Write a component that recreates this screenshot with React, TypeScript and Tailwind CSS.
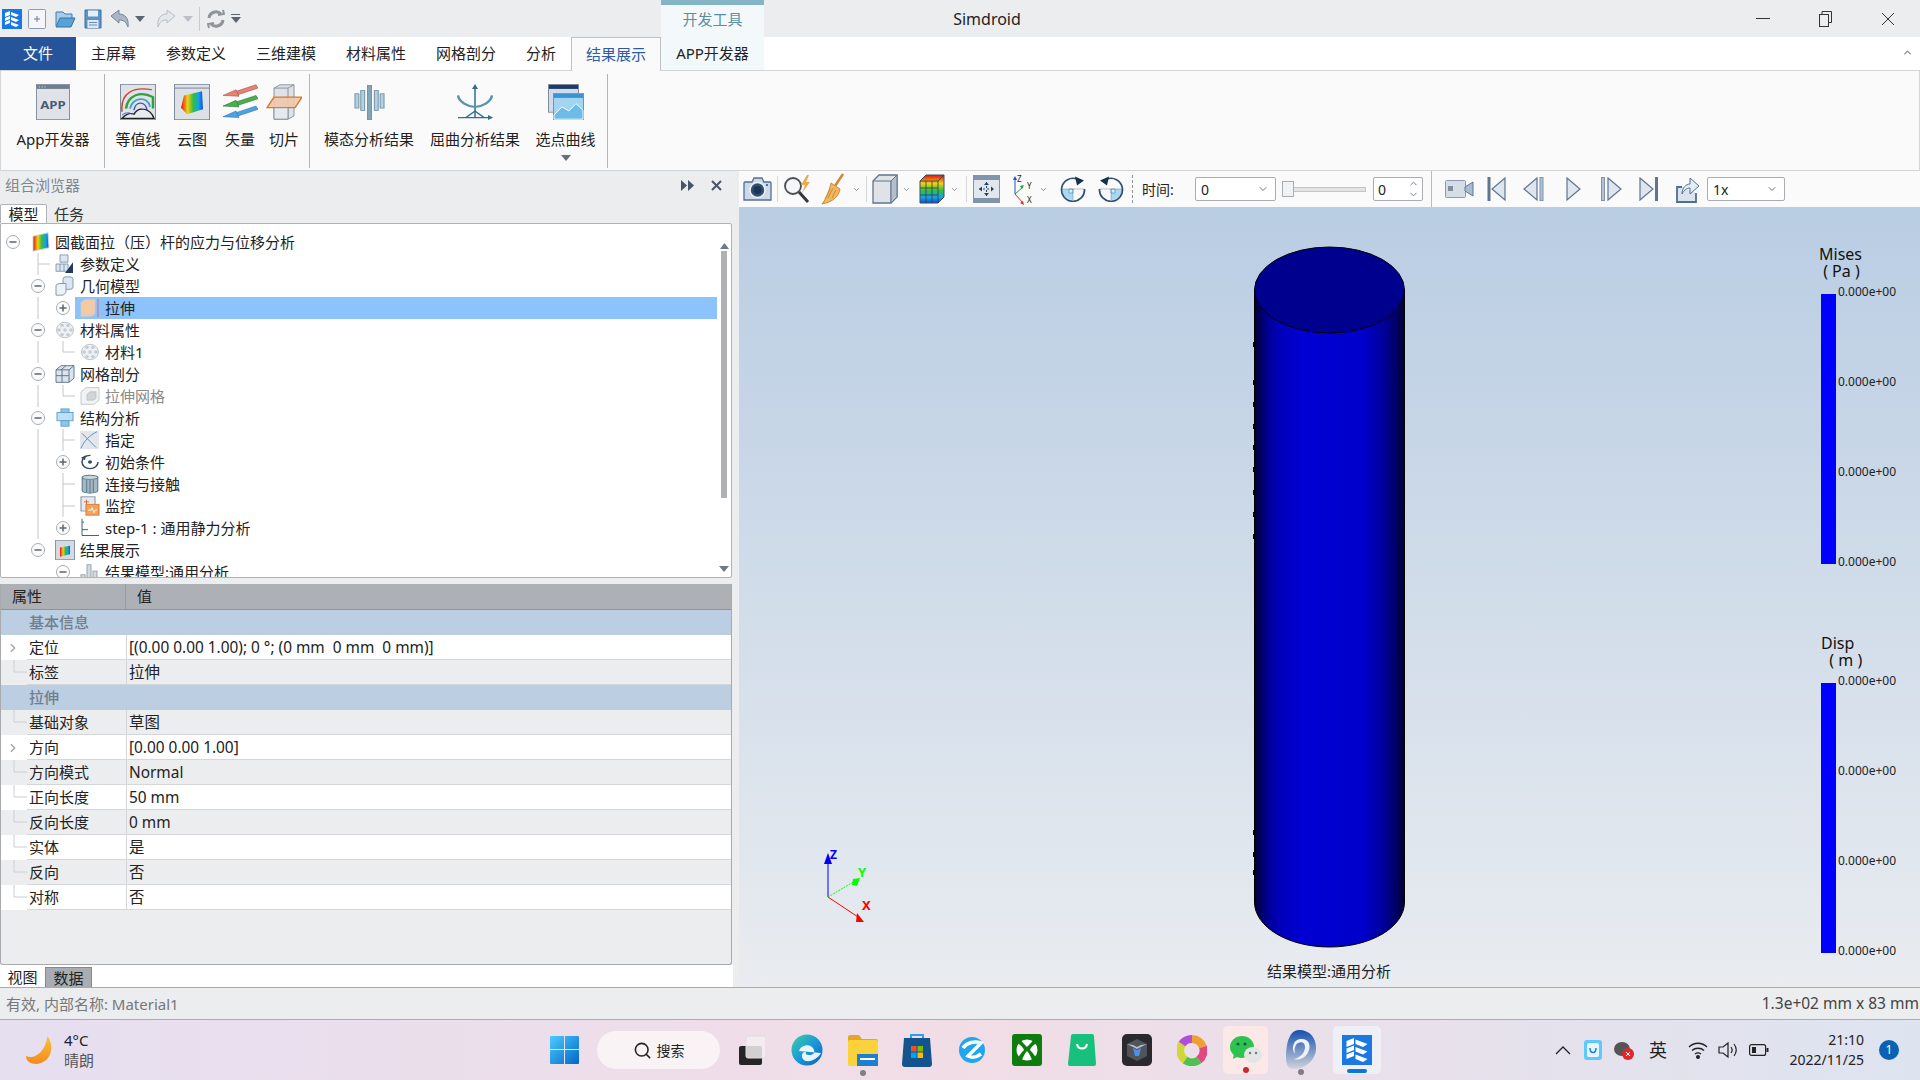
import React from "react";
import { Search, ChevronDown, ChevronUp, ChevronRight } from "lucide-react";

const FONT = "[font-family:'Noto_Sans','Noto_Sans_CJK_SC',sans-serif]";

const Ramp = ({ id, dir = "h" }: { id: string; dir?: string }) => (
  <linearGradient id={id} x1="0" y1="0" x2={dir === "h" ? "1" : "0"} y2={dir === "h" ? "0" : "1"}>
    <stop offset="0" stopColor="#e01010" />
    <stop offset="0.3" stopColor="#f4d010" />
    <stop offset="0.55" stopColor="#30c040" />
    <stop offset="0.8" stopColor="#18a0e8" />
    <stop offset="1" stopColor="#1050d0" />
  </linearGradient>
);

/* ---------- quick access ---------- */
const SimLogo = ({ s = 20 }: { s?: number }) => (
  <svg width={s} height={s} viewBox="0 0 20 20">
    <rect width="20" height="20" fill="#1b78e2" />
    <path d="M3 4l5-2v4l-5 2zM3 9l5-2v3l-5 2zM3 13l5-2v3l-5 2z" fill="#fff" />
    <path d="M9 3l8 3-3 2-5-2zM9 8l8 3-3 2-5-2zM9 13l8 3-3 2-5-2z" fill="#fff" />
  </svg>
);
const QatNew = () => (
  <svg width="18" height="20" viewBox="0 0 18 20"><rect x=".5" y=".5" width="17" height="19" rx="1" fill="#f4f6f9" stroke="#8b9cb3" /><path d="M9 7v6M6 10h6" stroke="#6a7a90" /></svg>
);
const QatOpen = () => (
  <svg width="21" height="18" viewBox="0 0 21 18"><path d="M1 16V2h7l2 2h7v4" fill="#a7cbe8" stroke="#3b7fb5" /><path d="M1 17l4-9h15l-4 9z" fill="#5aa1d8" stroke="#2d76ad" /></svg>
);
const QatSave = () => (
  <svg width="18" height="20" viewBox="0 0 18 20"><path d="M1 1h16v18H1z" fill="#5e93c7" stroke="#3d6f9f" /><rect x="4" y="1.5" width="10" height="6" fill="#e6eef6" /><rect x="3.500" y="11" width="11" height="8" fill="#dfe8f2" /><path d="M5 13.500h8M5 16h8" stroke="#6b8db0" /></svg>
);
const Undo = ({ c = "#74879c", flip = false }: { c?: string; flip?: boolean }) => (
  <svg width="20" height="20" viewBox="0 0 20 20" style={flip ? { transform: "scaleX(-1)" } : undefined}><path d="M1 7l8-6v4c6 0 10 4 9 13-2-5-4-7-9-7v3z" fill={c === "#74879c" ? "#aab6c4" : "#e3e6ea"} stroke={c} /></svg>
);
const TinyDown = ({ c = "#5d6670" }: { c?: string }) => (
  <svg width="10" height="6" viewBox="0 0 10 6"><path d="M0 0h10L5 6z" fill={c} /></svg>
);
const Refresh = () => (
  <svg width="18" height="20" viewBox="0 0 18 20" fill="none" stroke="#8e9499" strokeWidth="3"><path d="M2 9a7 7 0 0 1 12-4" /><path d="M16 11a7 7 0 0 1-12 4" /><path d="M11 6l6-1-1-4M7 14l-6 1 1 4" strokeWidth="2" /></svg>
);

const TitleBar = () => (
  <div className="h-[37px] shrink-0 flex bg-[#ecedef]">
    <div className="w-[661px] flex items-center">
      <div className="ml-[2px]"><SimLogo /></div>
      <div className="ml-[6px]"><QatNew /></div>
      <div className="ml-[9px]"><QatOpen /></div>
      <div className="ml-[8px]"><QatSave /></div>
      <div className="ml-[8px]"><Undo /></div>
      <div className="ml-[5px]"><TinyDown /></div>
      <div className="ml-[11px]"><Undo c="#b8bec5" flip /></div>
      <div className="ml-[7px]"><TinyDown c="#bcc1c7" /></div>
      <div className="ml-[6px] w-px h-[24px] bg-[#c8cbcf]" />
      <div className="ml-[7px]"><Refresh /></div>
      <div className="ml-[6px] flex flex-col gap-[2px]"><div className="w-[9px] h-px bg-[#5d6670]" /><TinyDown /></div>
    </div>
    <div className="w-[103px] bg-[#f3f8fb] border-t-[5px] border-[#85b5c5] flex items-center justify-center pb-[4px] text-[15px] text-[#5c8fa0]">开发工具</div>
    <div className="w-[446px] flex items-center justify-center text-[16px] text-[#222]">Simdroid</div>
    <div className="flex-1 relative flex items-center">
      <div className="ml-[546px] w-[14px] h-px bg-[#333]" />
      <svg className="ml-[49px]" width="13" height="16" viewBox="0 0 13 16" fill="none" stroke="#333"><rect x=".5" y="3.500" width="9" height="12" fill="#ecedef" /><path d="M3 3V.5h9.500v11H10" /></svg>
      <svg className="ml-[49px]" width="14" height="14" viewBox="0 0 14 14" stroke="#333"><path d="M1 1l12 12M13 1L1 13" /></svg>
    </div>
  </div>
);

const TABS: [string, string][] = [
  ["主屏幕", "w-[75px]"], ["参数定义", "w-[90px]"], ["三维建模", "w-[90px]"], ["材料属性", "w-[90px]"], ["网格剖分", "w-[90px]"], ["分析", "w-[60px]"],
];
const TabRow = () => (
  <div className="h-[33px] shrink-0 flex items-stretch bg-white text-[15px] text-[#222]">
    <div className="w-[76px] bg-[#26549b] text-white flex items-center justify-center">文件</div>
    {TABS.map(([t, w]) => <div key={t} className={`${w} flex items-center justify-center`}>{t}</div>)}
    <div className="w-[90px] flex items-center justify-center text-[#2a5ca8] bg-[#fafafa] border-x border-t border-[#bfc1c4] h-[34px] z-10">结果展示</div>
    <div className="w-[103px] flex items-center justify-center bg-[#f3f8fb]">APP开发器</div>
    <div className="flex-1 flex justify-end items-center pr-[7px] pb-[2px]"><ChevronUp size={11} strokeWidth={3} className="text-[#8a8f95]" /></div>
  </div>
);

/* ---------- ribbon icons ---------- */
const AppIcon = () => (
  <svg width="34" height="36" viewBox="0 0 36 44" preserveAspectRatio="none"><rect x=".5" y=".5" width="35" height="43" fill="#dfe3e8" stroke="#7f8c9c" /><rect x="1" y="1" width="34" height="5" fill="#6e7d90" /><path d="M3 3.500h1M6 3.500h1M9 3.500h1" stroke="#fff" /><text x="18" y="31" textAnchor="middle" fontSize="14" fontWeight="700" fill="#4a5a70" fontFamily="Noto Sans">APP</text></svg>
);
const ContourIcon = () => (
  <svg width="36" height="36" viewBox="0 0 36 44" preserveAspectRatio="none" fill="none">
    <rect x=".5" y=".5" width="35" height="43" fill="#dfe3e8" stroke="#7f8c9c" />
    <path d="M2 34C0 10 14 3 32 7" stroke="#d04030" strokeWidth="1.500" />
    <path d="M6 30C8 14 20 8 33 16v14" stroke="#30a040" strokeWidth="2.500" />
    <path d="M10 30c2-14 18-16 20-2" stroke="#38a8c0" strokeWidth="2" />
    <path d="M14 32c1-12 12-11 13 0" stroke="#5050c8" strokeWidth="1.500" />
    <path d="M2 42c6-8 10-6 12-5 4-10 16-8 20 5z" stroke="#222" strokeWidth="1.500" fill="#e8ecf0" />
    <path d="M2 38c4-4 8-3 10-1" stroke="#5050c8" />
  </svg>
);
const CloudIcon = () => (
  <svg width="36" height="36" viewBox="0 0 36 44" preserveAspectRatio="none">
    <defs><Ramp id="rc" /></defs>
    <rect x=".5" y=".5" width="35" height="43" fill="#dde1e6" stroke="#7f8c9c" />
    <path d="M1 5h34" stroke="#6e7d90" />
    <path d="M10 14l18-5 1 22-16 6-6-8z" fill="url(#rc)" />
  </svg>
);
const Arrow3 = ({ y, c, d }: { y: number; c: string; d: string }) => (
  <g transform={`translate(0 ${y})`}><path d="M14 8L34 0l2 4-20 8z" fill={c} stroke={d} strokeWidth=".6" /><path d="M1 13l13-7 3 8z" fill={c} stroke={d} strokeWidth=".6" /></g>
);
const VectorIcon = () => (
  <svg width="36" height="36" viewBox="0 0 36 44" preserveAspectRatio="none"><Arrow3 y={1} c="#e98070" d="#a04c40" /><Arrow3 y={14} c="#48b050" d="#287030" /><Arrow3 y={27} c="#4da3e0" d="#2a6aa0" /></svg>
);
const SliceIcon = () => (
  <svg width="36" height="36" viewBox="0 0 36 44" preserveAspectRatio="none">
    <path d="M8 5l6-4h14v38l-6 4H8z" fill="#dfe3e8" stroke="#7f8c9c" /><path d="M8 5h14v38M22 5l6-4" fill="none" stroke="#7f8c9c" />
    <path d="M1 29l7-13h28l-7 13z" fill="#f0c8a8" fillOpacity=".9" stroke="#d8772e" strokeWidth="1.500" />
    <path d="M8 29h14v14H8z" fill="#e6e9ed" stroke="#7f8c9c" />
  </svg>
);
const ModalIcon = () => (
  <svg width="31" height="35" viewBox="0 0 32 44" preserveAspectRatio="none"><g stroke="#6b90a6" fill="#b8d0de"><rect x="14" y=".5" width="4" height="43" fill="#84a5b7" /><rect x="1" y="11" width="4" height="18" /><rect x="7" y="7" width="4" height="25" /><rect x="21" y="7" width="4" height="25" /><rect x="27" y="11" width="4" height="18" /></g></svg>
);
const BuckleIcon = () => (
  <svg width="36" height="36" viewBox="0 0 36 44" preserveAspectRatio="none" fill="none" stroke="#2f6f8f" strokeWidth="1.500">
    <path d="M18 4v38M1 41h34" /><path d="M18 0l-3 6h6zM36 41l-5-3v6z" fill="#2f6f8f" stroke="none" />
    <path d="M1 14c1 8 10 14 17 14s16-6 17-14" stroke="#5b93ad" strokeWidth="2.500" />
    <path d="M9 41l9-8 9 8" />
  </svg>
);
const CurveIcon = () => (
  <svg width="36" height="36" viewBox="0 0 36 44" preserveAspectRatio="none">
    <rect x=".5" y=".5" width="30" height="34" fill="#cfdcea" stroke="#7f8c9c" /><rect x="1" y="1" width="29" height="5" fill="#1f3a63" />
    <rect x="5.500" y="11.500" width="30" height="32" fill="#a3d4f2" stroke="#4ba0d8" /><rect x="6" y="12" width="29" height="5" fill="#3b93d0" />
    <path d="M6 38l8-10 7 5 7-9 7 8v11H6z" fill="#6cbbe8" stroke="#fff" />
  </svg>
);

const RibBtn = ({ w, label, icon }: { w: string; label: string; icon: React.ReactNode }) => (
  <div className={`${w} flex flex-col items-center shrink-0`}>
    <div className="h-[36px] mt-[13px] flex items-center justify-center">{icon}</div>
    <div className="mt-[8px] text-[15px] leading-[22px] text-[#222] whitespace-nowrap">{label}</div>
  </div>
);
const RibSep = () => <div className="w-px h-[94px] mt-[3px] bg-[#b4b6b9] shrink-0" />;
const Ribbon = () => (
  <div className="h-[101px] shrink-0 flex bg-[#fafafa] border border-[#d3d4d6] pl-[1px] items-start">
    <RibBtn w="w-[102px]" label="App开发器" icon={<AppIcon />} />
    <RibSep />
    <div className="w-[6px]" />
    <RibBtn w="w-[54px]" label="等值线" icon={<ContourIcon />} />
    <RibBtn w="w-[54px]" label="云图" icon={<CloudIcon />} />
    <RibBtn w="w-[42px]" label="矢量" icon={<VectorIcon />} />
    <RibBtn w="w-[46px]" label="切片" icon={<SliceIcon />} />
    <div className="w-[2px]" />
    <RibSep />
    <RibBtn w="w-[118px]" label="模态分析结果" icon={<ModalIcon />} />
    <RibBtn w="w-[94px]" label="屈曲分析结果" icon={<BuckleIcon />} />
    <div className="w-[85px] pl-[2px] flex flex-col items-center shrink-0">
      <RibBtn w="w-[84px]" label="选点曲线" icon={<CurveIcon />} />
      <div className="mt-[5px]"><TinyDown c="#6a6f75" /></div>
    </div>
    <RibSep />
  </div>
);

/* ---------- tree ---------- */
const Cell = ({ t }: { t: string }) => {
  const g = "#c4c6c9";
  return (
    <svg width="25" height="22" viewBox="0 0 25 22" className="shrink-0" fill="none">
      {t === "v" && <path d="M13 0v22" stroke={g} />}
      {t === "T" && <path d="M13 0v22M13 11h12" stroke={g} />}
      {t === "L" && <path d="M13 0v11h12" stroke={g} />}
      {(t === "+" || t === "-") && (
        <>
          <circle cx="13" cy="11" r="6.500" fill="#fbfbfb" stroke="#a9adb2" />
          <path d="M9.500 11h7" stroke="#5e666f" strokeWidth="1.500" />
          {t === "+" && <path d="M13 7.500v7" stroke="#5e666f" strokeWidth="1.500" />}
        </>
      )}
    </svg>
  );
};
const TI = { width: 20, height: 20, preserveAspectRatio: "none" as const };
const TCloud = () => (
  <svg {...TI} viewBox="0 0 20 24"><defs><Ramp id="t1" /></defs><path d="M3 5l15-4 1 18-16 4z" fill="url(#t1)" stroke="#cfd6de" /></svg>
);
const TParam = () => (
  <svg {...TI} viewBox="0 0 20 22" fill="#dde6f0" stroke="#6f86a3" strokeWidth=".8"><path d="M5 1h8v8H5zM1 11h12v8H1z" /><path d="M5 11v8M9 11v8" /><path d="M18 9v12h-8z" fill="#1f3a63" stroke="none" /></svg>
);
const TGeo = () => (
  <svg {...TI} viewBox="0 0 20 24" fill="#dbe6f2" stroke="#7d93ad"><rect x="8" y="1" width="10" height="15" rx="3" /><path d="M1 11l3-2h7v11l-3 3H1z" fill="#eaf1f8" /></svg>
);
const TExtrude = () => (
  <svg {...TI} viewBox="0 0 20 24"><path d="M1 5l4-3h10v17l-4 3H1z" fill="#f4c9a4" stroke="#c8ccd2" /><path d="M1 19h10l4-3" fill="none" stroke="#ccd0d5" /><path d="M18 1v22" stroke="#d26a6a" /></svg>
);
const TMat = () => (
  <svg {...TI} viewBox="0 0 20 22" stroke="#b9c2cc"><circle cx="10" cy="11" r="8.500" fill="#eef1f4" /><g fill="#c3cbd4" stroke="none">{[[7,6],[13,6],[4,11],[10,11],[16,11],[7,16],[13,16]].map(([x,y],i)=><circle key={i} cx={x} cy={y} r="1.800" />)}</g></svg>
);
const TMesh = () => (
  <svg {...TI} viewBox="0 0 20 24" fill="#dbe3ec" stroke="#58708d"><path d="M1 7l5-5h13v15l-5 5H1z" /><path d="M1 7h13v15M14 7l5-5M7 7v15M1 14h13M11 2l-5 5" fill="none" /></svg>
);
const TMeshG = () => (
  <svg {...TI} viewBox="0 0 20 24" fill="#f1f2f3" stroke="#c2c5c8"><path d="M1 7l5-5h13v15l-5 5H1z" /><path d="M7 10l3-3h6v8l-3 2H7z" fill="#d2d4d7" /></svg>
);
const TStruct = () => (
  <svg {...TI} viewBox="0 0 20 22" fill="#8ec7ea" stroke="#5fa0cb"><rect x="6" y="1" width="8" height="4" /><rect x="2" y="5" width="16" height="9" fill="#bfe0f4" /><rect x="6" y="14" width="8" height="6" /></svg>
);
const TAssign = () => (
  <svg {...TI} viewBox="0 0 20 24" fill="none"><rect x="0" y="1" width="19" height="22" fill="#e3e6ea" /><path d="M2 4l14 17M1 22c3-9 9-16 16-20" stroke="#4f8cc0" /></svg>
);
const TInit = () => (
  <svg {...TI} viewBox="0 0 20 24" fill="none"><circle cx="10" cy="12" r="8" stroke="#2f4a6b" strokeWidth="1.500" strokeDasharray="38 12" /><circle cx="10" cy="12" r="2" fill="#2f4a6b" /><path d="M1 7l5-3-1 6z" fill="#2f4a6b" /></svg>
);
const TContact = () => (
  <svg {...TI} viewBox="0 0 18 24" stroke="#5c7f8f" fill="#a8b8c0"><path d="M2 4h14v16a7 3 0 0 1-14 0z" /><ellipse cx="9" cy="4" rx="7" ry="2.500" fill="#cbd6db" /><path d="M6 7v15M9 7v16M12 7v15" /></svg>
);
const TMonitor = () => (
  <svg {...TI} viewBox="0 0 20 24"><rect x="1" y="1" width="14" height="17" fill="#e6eaef" stroke="#7d8c9d" /><rect x="6" y="10" width="13" height="13" fill="#f2a25a" stroke="#d87a2a" /><path d="M8 17h3l1-3 2 6 1-3h2" fill="none" stroke="#fff" /><path d="M4 7h5M6.500 4.500v5" stroke="#d8602a" /></svg>
);
const TStep = () => (
  <svg {...TI} viewBox="0 0 20 24" fill="none" stroke="#38536f"><path d="M2 1v20h17" /><path d="M2 5h2M2 14h6" /></svg>
);
const TResult = () => (
  <svg {...TI} viewBox="0 0 20 24"><defs><Ramp id="t2" /></defs><rect x=".5" y=".5" width="19" height="23" fill="#d6dae0" stroke="#8b96a3" /><path d="M5 9l10-2v10l-10 3z" fill="url(#t2)" /></svg>
);
const TBars = () => (
  <svg {...TI} viewBox="0 0 20 22" fill="#d5dae0" stroke="#9aa3ad"><rect x="1" y="14" width="4" height="8" /><rect x="7" y="3" width="4" height="19" /><rect x="13" y="10" width="4" height="12" /></svg>
);

type Row = { c: string[]; i: React.ReactNode; t: string; sel?: boolean; gray?: boolean };
const ROWS: Row[] = [
  { c: ["-"], i: <TCloud />, t: "圆截面拉（压）杆的应力与位移分析" },
  { c: ["", "T"], i: <TParam />, t: "参数定义" },
  { c: ["", "-"], i: <TGeo />, t: "几何模型" },
  { c: ["", "v", "+"], i: <TExtrude />, t: "拉伸", sel: true },
  { c: ["", "-"], i: <TMat />, t: "材料属性" },
  { c: ["", "v", "L"], i: <TMat />, t: "材料1" },
  { c: ["", "-"], i: <TMesh />, t: "网格剖分" },
  { c: ["", "v", "L"], i: <TMeshG />, t: "拉伸网格", gray: true },
  { c: ["", "-"], i: <TStruct />, t: "结构分析" },
  { c: ["", "v", "T"], i: <TAssign />, t: "指定" },
  { c: ["", "v", "+"], i: <TInit />, t: "初始条件" },
  { c: ["", "v", "T"], i: <TContact />, t: "连接与接触" },
  { c: ["", "v", "T"], i: <TMonitor />, t: "监控" },
  { c: ["", "v", "+"], i: <TStep />, t: "step-1 : 通用静力分析" },
  { c: ["", "-"], i: <TResult />, t: "结果展示" },
  { c: ["", "", "-"], i: <TBars />, t: "结果模型:通用分析" },
];

const Tree = () => (
  <div className="h-[355px] w-[732px] shrink-0 flex bg-white border border-[#b0b2b5] rounded-[2px] overflow-hidden">
    <div className="w-[717px] -ml-[1px] pt-[7px] shrink-0">
      {ROWS.map((r, idx) => (
        <div key={idx} className="h-[22px] flex items-stretch">
          {r.c.map((t, i) => <Cell key={i} t={t} />)}
          <div className={`flex-1 flex items-center pl-[5px] ${r.sel ? "bg-[#8cc3fc]" : ""}`}>
            <div className="w-[25px] flex items-center">{r.i}</div>
            <span className={`text-[15px] leading-[22px] whitespace-nowrap ${r.gray ? "text-[#8a8a8a]" : "text-[#222]"}`}>{r.t}</span>
          </div>
        </div>
      ))}
    </div>
    <div className="w-[14px] flex flex-col items-center pt-[19px] pb-[5px]">
      <svg width="9" height="6" viewBox="0 0 9 6"><path d="M0 6h9L4.500 0z" fill="#6f7a85" /></svg>
      <div className="w-[6px] h-[247px] mt-[2px] bg-[#aeb1b5]" />
      <div className="flex-1" />
      <TinyDown c="#6f7a85" />
    </div>
  </div>
);

/* ---------- properties ---------- */
type P = { k: string; v?: string; head?: boolean; exp?: boolean; white?: boolean };
const PROPS: P[] = [
  { k: "基本信息", head: true },
  { k: "定位", v: "[(0.00 0.00 1.00); 0 °; (0 mm  0 mm  0 mm)]", exp: true, white: true },
  { k: "标签", v: "拉伸" },
  { k: "拉伸", head: true },
  { k: "基础对象", v: "草图" },
  { k: "方向", v: "[0.00 0.00 1.00]", exp: true, white: true },
  { k: "方向模式", v: "Normal" },
  { k: "正向长度", v: "50 mm", white: true },
  { k: "反向长度", v: "0 mm" },
  { k: "实体", v: "是", white: true },
  { k: "反向", v: "否" },
  { k: "对称", v: "否", white: true },
];
const PropRow = ({ p }: { p: P }) => {
  if (p.head)
    return <div className="h-[25px] bg-[#bbcee2] pl-[28px] flex items-center text-[15px] font-medium text-[#6f7f8f]">{p.k}</div>;
  const bg = p.white ? "bg-white" : "bg-[#ecedef]";
  return (
    <div className={`h-[25px] flex ${bg}`}>
      <div className="w-[26px] flex items-center bg-white shrink-0 relative">
        {p.exp ? (
          <ChevronRight size={14} strokeWidth={2} className="ml-[5px] text-[#9aa0a6]" />
        ) : (
          <svg width="26" height="25" viewBox="0 0 26 25" fill="none" className={p.white ? "bg-white" : "bg-[#ecedef]"}><path d="M13 0v12h13" stroke="#ccced1" /></svg>
        )}
      </div>
      <div className="w-[99px] pl-[2px] flex items-center text-[15px] text-[#222] border-b border-[#d4d6d9] shrink-0">{p.k}</div>
      <div className="flex-1 pl-[2px] pt-[1px] flex items-center text-[15.4px] text-[#222] border-b border-l border-[#d4d6d9] whitespace-pre">{p.v}</div>
    </div>
  );
};
const Props = () => (
  <div className="h-[381px] w-[732px] shrink-0 mt-[6px] flex flex-col bg-[#ecedef] border-x border-b border-[#a8aaad] rounded-b-[3px] overflow-hidden">
    <div className="h-[26px] flex bg-[#adb1b5] border-b border-[#8f9397] text-[15px] text-[#222] shrink-0">
      <div className="w-[125px] pl-[11px] flex items-center border-r border-[#979b9f]">属性</div>
      <div className="pl-[11px] flex items-center">值</div>
    </div>
    {PROPS.map((p, i) => <PropRow key={i} p={p} />)}
  </div>
);

const LeftPanel = () => (
  <div className="w-[739px] shrink-0 flex flex-col bg-[#ecedef]">
    <div className="h-[33px] w-[732px] flex items-center pl-[5px] pb-[4px] text-[15px] text-[#7f878f] shrink-0">
      <span>组合浏览器</span>
      <div className="flex-1" />
      <svg className="mr-[16px]" width="14" height="11" viewBox="0 0 14 11" fill="#4a5563"><path d="M0 0l6 5.500L0 11zM7 0l6 5.500L7 11z" /></svg>
      <svg className="mr-[10px]" width="11" height="11" viewBox="0 0 11 11" stroke="#4a5563" strokeWidth="2"><path d="M1 1l9 9M10 1l-9 9" /></svg>
    </div>
    <div className="h-[19px] flex text-[15px] text-[#222] shrink-0">
      <div className="w-[47px] bg-white border border-b-0 border-[#b0b2b5] rounded-t-[2px] flex items-center justify-center leading-[18px]">模型</div>
      <div className="ml-[7px] w-[30px] flex items-center justify-center leading-[18px] text-[#333]">任务</div>
    </div>
    <Tree />
    <Props />
    <div className="h-[22px] w-[733px] flex items-end bg-white text-[15px] text-[#222]">
      <div className="w-[45px] h-[20px] flex items-center justify-center leading-[20px]">视图</div>
      <div className="w-[47px] h-[20px] flex items-center justify-center bg-[#a9adb1] border border-b-0 border-[#85888b] leading-[20px]">数据</div>
    </div>
  </div>
);

/* ---------- viewport toolbar ---------- */
const Caret = ({ m }: { m: string }) => <ChevronDown size={9} strokeWidth={2} className={`${m} text-[#6a7380] shrink-0`} />;
const VSep = ({ m }: { m: string }) => <div className={`${m} w-px h-[26px] bg-[#d6d8da] shrink-0`} />;
const Select = ({ m, w, v }: { m: string; w: string; v: string }) => (
  <div className={`${m} ${w} h-[24px] bg-white border border-[#a9adb2] rounded-[2px] flex items-center pl-[5px] pr-[6px] justify-between text-[14px] text-[#222] shrink-0`}>
    <span>{v}</span><ChevronDown size={12} className="text-[#6f7a85]" />
  </div>
);
const Cam = () => (
  <svg width="29" height="26" viewBox="0 0 29 26"><path d="M2 6h7l2-4h8l2 4h6a1 1 0 0 1 1 1v17H1V7a1 1 0 0 1 1-1z" fill="#cdd9e6" stroke="#4f6f96" strokeWidth="1.300" /><circle cx="14.500" cy="14" r="7.500" fill="#304f73" stroke="#eef3f8" strokeWidth="1.500" /><circle cx="14.500" cy="14" r="4" fill="#1c3553" /><circle cx="24" cy="9" r="1" fill="#304f73" /></svg>
);
const Mag = () => (
  <svg width="31" height="30" viewBox="0 0 31 30" fill="none"><circle cx="10" cy="12" r="8" stroke="#4a4f55" strokeWidth="1.800" fill="#f4f6f8" /><path d="M16 18l9 10" stroke="#33383e" strokeWidth="3" /><path d="M24 1l-6 10h4l-3 8 8-11h-4l3-7z" fill="#eda84c" /></svg>
);
const Brush = () => (
  <svg width="24" height="32" viewBox="0 0 24 32"><path d="M22 1L14 13" stroke="#c98a3a" strokeWidth="2.500" /><path d="M10 10l9 6c-1 7-7 13-18 15 4-5 7-12 9-21z" fill="#f0b860" stroke="#cf8a30" /><path d="M7 25l5-10M11 25l4-8M4 26l5-10" stroke="#cf8a30" /></svg>
);
const Cube = () => (
  <svg width="26" height="30" viewBox="0 0 26 30"><path d="M1 7l6-6h18v22l-6 6H1z" fill="#dfe3e8" stroke="#5f7590" strokeWidth="1.300" /><path d="M1 7h18v22M19 7l6-6" fill="none" stroke="#5f7590" /><path d="M19 7l6-6v22l-6 6z" fill="#b4bfcc" stroke="#5f7590" /></svg>
);
const CCube = () => (
  <svg width="26" height="30" viewBox="0 0 26 30">
    <defs><Ramp id="cc" dir="v" /></defs>
    <path d="M1 7l6-6h18v22l-6 6H1z" fill="url(#cc)" stroke="#3f4f63" />
    <path d="M1 7h18v22M19 7l6-6M7 7v22M13 7v22M1 14h18M1 21h18" fill="none" stroke="#2f3d4f" strokeWidth=".8" />
  </svg>
);
const MoveIcon = () => (
  <svg width="27" height="28" viewBox="0 0 27 28"><rect x=".5" y=".5" width="26" height="27" fill="#e2e7ee" stroke="#8094ab" /><rect x="1" y="1" width="25" height="4" fill="#8094ab" /><rect x="1" y="23" width="25" height="4" fill="#8094ab" /><path d="M13.500 7v14M6 14h15" stroke="#24405f" strokeDasharray="2 2" /><path d="M13.500 7l-2.500 3h5zM13.500 21l-2.500-3h5zM6 14l3-2.500v5zM21 14l-3-2.500v5z" fill="#24405f" /></svg>
);
const AxesIcon = () => (
  <svg width="23" height="34" viewBox="0 0 23 34" fill="none">
    <path d="M3 22V6" stroke="#2050c8" /><path d="M3 22l8-7" stroke="#20a040" /><path d="M3 22l8 9" stroke="#d03030" />
    <path d="M3 4l-2 4h4z" fill="#2050c8" /><path d="M12 13l-4 1 2 3z" fill="#20a040" /><path d="M12 33l-1-4-3 2z" fill="#d03030" />
    <text x="5" y="10" fontSize="8" fill="#222" fontFamily="Noto Sans">Z</text><text x="15" y="17" fontSize="8" fill="#222" fontFamily="Noto Sans">Y</text><text x="15" y="31" fontSize="8" fill="#222" fontFamily="Noto Sans">X</text>
  </svg>
);
const Rot = ({ flip = false }: { flip?: boolean }) => (
  <svg width="26" height="26" viewBox="0 0 26 26" fill="none" style={flip ? { transform: "scaleX(-1)" } : undefined}>
    <path d="M13 13H2a11 11 0 0 0 11 11z" fill="#a8d8f4" />
    <path d="M13 13h-4v4h4z" fill="#d8eefb" stroke="#4f90c0" strokeWidth=".7" />
    <path d="M1.500 13h23M13 13v11" stroke="#2f4f73" strokeWidth=".9" opacity=".35" />
    <path d="M17 3A11.500 11.500 0 1 0 24.500 13" stroke="#2f4f73" strokeWidth="1.700" />
    <path d="M15 .5l9 4-7 5z" fill="#17324f" />
  </svg>
);
const Tri = ({ d }: { d: "l" | "r" }) => (
  <path d={d === "r" ? "M1 1l13 11L1 23z" : "M14 1L1 12l13 11z"} fill="#dee5ee" stroke="#5f7590" strokeWidth="1.200" />
);
const Transport = () => (
  <>
    <svg className="ml-[13px] shrink-0" width="29" height="22" viewBox="0 0 29 22"><rect x=".5" y="2.500" width="20" height="17" rx="1" fill="#d5dde6" stroke="#8a9bb0" /><rect x="3" y="8" width="5" height="5" fill="#7f8d9c" /><path d="M20 9l8-5v14l-8-5z" fill="#a8bdd2" stroke="#5f7590" /></svg>
    <svg className="ml-[13px] shrink-0" width="20" height="24" viewBox="0 0 20 24"><rect x="0.500" y="0" width="3" height="24" fill="#5f7590" /><g transform="translate(4 0)"><Tri d="l" /></g></svg>
    <svg className="ml-[16px] shrink-0" width="23" height="24" viewBox="0 0 23 24"><Tri d="l" /><rect x="17" y=".5" width="3" height="23" fill="#b3c1d0" stroke="#7f93aa" /></svg>
    <svg className="ml-[20px] shrink-0" width="17" height="24" viewBox="0 0 17 24"><Tri d="r" /></svg>
    <svg className="ml-[18px] shrink-0" width="22" height="24" viewBox="0 0 22 24"><rect x=".5" y=".5" width="3" height="23" fill="#b3c1d0" stroke="#7f93aa" /><g transform="translate(6 0)"><Tri d="r" /></g></svg>
    <svg className="ml-[16px] shrink-0" width="20" height="24" viewBox="0 0 20 24"><Tri d="r" /><rect x="16" y="0" width="3" height="24" fill="#5f7590" /></svg>
    <svg className="ml-[17px] shrink-0" width="24" height="28" viewBox="0 0 24 28" fill="none"><path d="M6 12H1v15h19V18" stroke="#4f6f90" strokeWidth="1.800" fill="#dbe4ee" /><path d="M6 19c0-6 4-10 8-10V3l9 8-9 8v-6c-3 0-6 2-8 6z" fill="#e6edf4" stroke="#4f6f90" /></svg>
  </>
);
const Toolbar = () => (
  <div className="h-[36px] shrink-0 flex items-center bg-[#fafafa] text-[14px] text-[#222]">
    <div className="ml-[4px] shrink-0"><Cam /></div>
    <VSep m="ml-[5px]" />
    <div className="ml-[5px] shrink-0"><Mag /></div>
    <div className="ml-[7px] shrink-0"><Brush /></div>
    <Caret m="ml-[7px]" />
    <VSep m="ml-[5px]" />
    <div className="ml-[5px] shrink-0"><Cube /></div>
    <Caret m="ml-[4px]" />
    <div className="ml-[8px] shrink-0"><CCube /></div>
    <Caret m="ml-[5px]" />
    <VSep m="ml-[7px]" />
    <div className="ml-[6px] shrink-0"><MoveIcon /></div>
    <div className="ml-[12px] shrink-0"><AxesIcon /></div>
    <Caret m="ml-[4px]" />
    <div className="ml-[12px] shrink-0"><Rot /></div>
    <div className="ml-[12px] shrink-0"><Rot flip /></div>
    <div className="ml-[8px] h-[28px] border-l border-dashed border-[#8f9398] shrink-0" />
    <div className="ml-[9px] w-[33px] whitespace-nowrap shrink-0">时间:</div>
    <Select m="ml-[20px]" w="w-[81px]" v="0" />
    <div className="ml-[6px] w-[84px] h-[20px] relative shrink-0 flex items-center">
      <div className="w-full h-[5px] bg-[#e3e4e6] border border-[#c2c4c7]" />
      <div className="absolute left-0 top-[2px] w-[12px] h-[16px] bg-[#f1f2f3] border border-[#a9adb2]" />
    </div>
    <div className="ml-[7px] w-[50px] h-[24px] bg-white border border-[#a9adb2] rounded-[2px] flex items-center pl-[4px] justify-between shrink-0">
      <span>0</span>
      <div className="flex flex-col mr-[3px]"><ChevronUp size={11} className="text-[#6f7a85]" /><ChevronDown size={11} className="text-[#6f7a85]" /></div>
    </div>
    <div className="ml-[8px] w-px h-[36px] bg-[#b8babd] shrink-0" />
    <Transport />
    <Select m="ml-[7px]" w="w-[78px]" v="1x" />
  </div>
);

/* ---------- viewport ---------- */
const Legend = ({ pos, title, unit, tshift }: { pos: string; title: string; unit: string; tshift: string }) => (
  <div className={`absolute ${pos} w-[90px] text-[#111]`}>
    <div className={`${tshift} text-[16px] leading-[17px] whitespace-pre`}>{title}</div>
    <div className={`${tshift} text-[16px] leading-[17px] whitespace-pre`}>{unit}</div>
    <div className="flex mt-[5px]">
      <div className="h-[270px] w-[15px] bg-[#0000ff] shrink-0 mt-[9px]" />
      <div className="ml-[2px] flex flex-col gap-[76px] text-[12px] leading-[14px] text-[#222]">
        <span>0.000e+00</span><span>0.000e+00</span><span>0.000e+00</span><span>0.000e+00</span>
      </div>
    </div>
  </div>
);
const Scene = () => (
  <svg className="absolute inset-0" width="1181" height="780" viewBox="739 207 1181 780">
    <defs>
      <linearGradient id="cyl" x1="0" y1="0" x2="1" y2="0">
        <stop offset="0" stopColor="#000030" />
        <stop offset=".04" stopColor="#000060" />
        <stop offset=".08" stopColor="#00008c" />
        <stop offset=".16" stopColor="#0000b8" />
        <stop offset=".32" stopColor="#0000d4" />
        <stop offset=".72" stopColor="#0000cc" />
        <stop offset=".86" stopColor="#00009c" />
        <stop offset=".95" stopColor="#000060" />
        <stop offset="1" stopColor="#000030" />
      </linearGradient>
    </defs>
    <path d="M1254.500 290V902C1254.500 927 1288 947 1329.500 947S1404.500 927 1404.500 902V290Z" fill="url(#cyl)" stroke="#000" />
    <ellipse cx="1329.500" cy="290" rx="75" ry="43" fill="#00008e" stroke="#000" />
    {[342, 380, 402, 424, 445, 467, 490, 512, 534, 830, 852, 870].map((y) => <rect key={y} x="1253" y={y} width="2" height="5" fill="#000" />)}
    <path d="M828 897V860" stroke="#0000ff" />
    <path d="M828 897L855 881" stroke="#00ff00" strokeDasharray="2 1" />
    <path d="M828 897L858 917" stroke="#ff0000" />
    <path d="M828 853l-4 11h8z" fill="#0000ff" />
    <path d="M853 879l7-1-3 8-5-1z" fill="#00ff00" />
    <path d="M857 913l7 9-8 0z" fill="#ff0000" />
    <text x="830" y="859" fontSize="12" fontWeight="700" fill="#0000ff" fontFamily="Noto Sans">Z</text>
    <text x="858" y="877" fontSize="13" fontWeight="700" fill="#00ff00" fontFamily="Noto Sans">Y</text>
    <text x="862" y="910" fontSize="13" fontWeight="700" fill="#ff0000" fontFamily="Noto Sans">X</text>
  </svg>
);
const Viewport = () => (
  <div className="flex-1 relative overflow-hidden bg-gradient-to-b from-[#b9cde3] to-[#e9ecf0]">
    <Scene />
    <Legend pos="left-[1082px] top-[39px]" title="Mises" unit=" ( Pa )" tshift="-ml-[2px]" />
    <Legend pos="left-[1082px] top-[428px]" title="Disp" unit="  ( m )" tshift="" />
    <div className="absolute left-[528px] top-[754px] w-[124px] text-center text-[15px] leading-[20px] text-[#222] whitespace-nowrap">结果模型:通用分析</div>
  </div>
);

/* ---------- taskbar ---------- */
const Moon = () => (
  <svg width="30" height="30" viewBox="0 0 28 30" preserveAspectRatio="none"><defs><linearGradient id="m" x1="0" y1="0" x2="0" y2="1"><stop offset="0" stopColor="#f7c53a" /><stop offset="1" stopColor="#f28a1e" /></linearGradient></defs><path d="M20 1c7 10 4 26-10 28C4 29 0 26 0 21c8 4 18-4 20-20z" fill="url(#m)" /></svg>
);
const Win = () => (
  <svg width="29" height="30" viewBox="0 0 29 30"><defs><linearGradient id="w" x1="0" y1="0" x2="1" y2="1"><stop offset="0" stopColor="#4dcbff" /><stop offset="1" stopColor="#0067c8" /></linearGradient></defs><path d="M1 1h13v13H0V2a1 1 0 0 1 1-1zM15 1h13a1 1 0 0 1 1 1v12H15zM0 15h14v14H1a1 1 0 0 1-1-1zM15 15h14v13a1 1 0 0 1-1 1H15z" fill="url(#w)" /></svg>
);
const TaskView = () => (
  <svg width="28" height="30" viewBox="0 0 28 30"><rect x="1" y="11" width="23" height="19" rx="2" fill="#252525" /><rect x="8" y="1" width="20" height="22" rx="2" fill="#f2eef1" fillOpacity=".85" stroke="#ddd" /></svg>
);
const Edge = () => (
  <svg width="32" height="32" viewBox="0 0 32 32"><defs><linearGradient id="ed" x1="0" y1="0" x2="1" y2="1"><stop offset="0" stopColor="#3fd0a0" /><stop offset=".5" stopColor="#1a9ad8" /><stop offset="1" stopColor="#0b5fb8" /></linearGradient></defs><circle cx="16" cy="16" r="15.500" fill="url(#ed)" /><path d="M8 17c2-7 13-8 15-1 1 3-1 5-5 5-3 0-4-1-3-3-5-1-6 7 0 9 6 1 12-3 15-8" fill="#fff" fillOpacity=".9" /></svg>
);
const Folder = () => (
  <svg width="30" height="32" viewBox="0 0 30 32"><path d="M0 3a2 2 0 0 1 2-2h9l3 4h14a2 2 0 0 1 2 2v4H0z" fill="#e6a52a" /><rect y="6" width="30" height="26" rx="2" fill="#fbd13c" /><rect x="9" y="20" width="21" height="12" fill="#1c7fd0" /><rect x="12" y="24" width="15" height="2" fill="#fff" /></svg>
);
const Store = () => (
  <svg width="30" height="34" viewBox="0 0 30 34"><path d="M9 5V2h12v3" fill="none" stroke="#2ba0e8" strokeWidth="2" /><path d="M2 5h26l2 26a3 3 0 0 1-3 3H3a3 3 0 0 1-3-3z" fill="#14548e" /><rect x="9" y="13" width="5.500" height="5.500" fill="#f25022" /><rect x="15.500" y="13" width="5.500" height="5.500" fill="#7fba00" /><rect x="9" y="19.500" width="5.500" height="5.500" fill="#00a4ef" /><rect x="15.500" y="19.500" width="5.500" height="5.500" fill="#ffb900" /></svg>
);
const EBlue = () => (
  <svg width="28" height="30" viewBox="0 0 28 30"><circle cx="14" cy="15" r="13" fill="#1ea7f0" /><path d="M5 13c4-6 12-7 18-5L10 21c4 2 9 1 13-2" fill="none" stroke="#fff" strokeWidth="3.500" /></svg>
);
const Xbox = () => (
  <svg width="30" height="32" viewBox="0 0 30 32"><rect width="30" height="32" rx="3" fill="#107c10" /><circle cx="15" cy="16" r="10.500" fill="#fff" /><path d="M15 13C11 9 9 6 7 5l-3 4c3 0 7 4 8 7-3 3-7 8-6 10l3 2c2-5 4-9 6-11 2 2 4 6 6 11l3-2c1-2-3-7-6-10 1-3 5-7 8-7l-3-4c-2 1-4 4-8 8z" fill="#107c10" /></svg>
);
const GreenBag = () => (
  <svg width="28" height="32" viewBox="0 0 28 32"><path d="M3 2a2 2 0 0 1 2-2h19a2 2 0 0 1 2 2l2 28a2 2 0 0 1-2 2H2a2 2 0 0 1-2-2z" fill="#17c07c" /><path d="M9 10c1 6 9 6 10 0" fill="none" stroke="#fff" strokeWidth="2" /></svg>
);
const BoxI = () => (
  <svg width="30" height="32" viewBox="0 0 30 32"><rect width="30" height="32" rx="5" fill="#2a2a2e" /><path d="M15 5l10 5v12l-10 5-10-5V10z" fill="#50545c" /><path d="M5 10l10 5 10-5-6 1-4 2-4-2z" fill="#b8bcc4" /><path d="M11 14l4 2 4-2-2 8h-4z" fill="#4a90e8" /></svg>
);
const Ring = () => (
  <svg width="30" height="32" viewBox="0 0 30 32" fill="none" strokeWidth="8"><path d="M15 5a12 12 0 0 1 11 8" stroke="#f0a030" /><path d="M26 13a12 12 0 0 1-4 13" stroke="#e04880" /><path d="M22 26a12 12 0 0 1-14 0" stroke="#50c050" /><path d="M8 26A12 12 0 0 1 5 10" stroke="#d0d838" /><path d="M5 10a12 12 0 0 1 10-5" stroke="#b050d8" /></svg>
);
const WeChat = () => (
  <svg width="32" height="30" viewBox="0 0 32 30"><ellipse cx="12" cy="12" rx="12" ry="11" fill="#2ec24f" /><path d="M4 18l-1 6 6-3z" fill="#2ec24f" /><circle cx="8" cy="9" r="1.500" fill="#155" /><circle cx="15" cy="9" r="1.500" fill="#155" /><ellipse cx="23" cy="20" rx="9" ry="8" fill="#e4e6e6" /><circle cx="20" cy="18" r="1.200" fill="#777" /><circle cx="26" cy="18" r="1.200" fill="#777" /></svg>
);
const Swirl = () => (
  <svg width="30" height="40" viewBox="0 0 30 40"><defs><linearGradient id="sw" x1="0" y1="0" x2="0" y2="1"><stop offset="0" stopColor="#1550b0" /><stop offset="1" stopColor="#d0d4da" /></linearGradient></defs><path d="M13 0c11 0 17 8 17 18 0 12-11 21-22 21-6 0-8-4-8-12C0 12 4 0 13 0z" fill="url(#sw)" /><path d="M14 9c8-1 11 5 9 11-2 7-9 11-15 9 6-1 11-6 11-12 0-4-3-6-7-4-3 2-4 6-3 11-4-5-2-14 5-15z" fill="#eef2f8" /></svg>
);
const Tile = ({ m, children, dot, cls = "" }: { m: string; children: React.ReactNode; dot?: string; cls?: string }) => (
  <div className={`${m} relative flex items-center justify-center shrink-0 ${cls}`}>
    {children}
    {dot && <div className={`absolute left-1/2 -translate-x-1/2 w-[6px] h-[6px] rounded-full ${dot}`} />}
  </div>
);
const Taskbar = () => (
  <div className="h-[60px] shrink-0 flex items-center bg-gradient-to-r from-[#e6dff0] via-[#f1dde6] to-[#dde4f0] text-[#222]">
    <div className="ml-[26px]"><Moon /></div>
    <div className="ml-[8px] w-[40px] text-[15px] leading-[20px]"><div>4°C</div><div className="text-[#555]">晴朗</div></div>
    <div className="ml-[446px]"><Win /></div>
    <div className="ml-[18px] w-[123px] h-[38px] rounded-[19px] bg-[#f9f3f6] flex items-center justify-center text-[14px]"><Search size={19} strokeWidth={2} className="mr-[5px]" />搜索</div>
    <div className="ml-[18px] shrink-0"><TaskView /></div>
    <Tile m="ml-[25px]"><Edge /></Tile>
    <Tile m="ml-[23px] h-[48px] w-[34px]" dot="bg-[#7e7e85] bottom-[-2px]"><Folder /></Tile>
    <Tile m="ml-[22px]"><Store /></Tile>
    <Tile m="ml-[26px]"><EBlue /></Tile>
    <Tile m="ml-[26px]"><Xbox /></Tile>
    <Tile m="ml-[26px]"><GreenBag /></Tile>
    <Tile m="ml-[26px]"><BoxI /></Tile>
    <Tile m="ml-[25px]"><Ring /></Tile>
    <Tile m="ml-[16px] w-[45px] h-[48px]" cls="bg-[#fde8e8] rounded-[5px]" dot="bg-[#c8282c] bottom-[1px]"><WeChat /></Tile>
    <Tile m="ml-[18px] w-[30px] h-[48px]" dot="bg-[#7e7e85] bottom-[-1px]"><Swirl /></Tile>
    <Tile m="ml-[17px] w-[48px] h-[48px]" cls="bg-[#eef0f6] rounded-[5px]">
      <SimLogo s={30} />
      <div className="absolute bottom-[1px] left-[14px] w-[20px] h-[4px] rounded-full bg-[#0a78d6]" />
    </Tile>
    <svg className="ml-[174px] shrink-0" width="16" height="9" viewBox="0 0 16 9" fill="none" stroke="#222" strokeWidth="1.300"><path d="M1 8l7-7 7 7" /></svg>
    <svg className="ml-[13px] shrink-0" width="18" height="20" viewBox="0 0 18 20"><rect width="18" height="20" rx="3" fill="#5ec8ff" /><rect x="3" y="3" width="12" height="14" rx="2" fill="#e8f6ff" /><path d="M6 8c0 6 6 6 6 0" fill="none" stroke="#1a80d8" strokeWidth="1.500" /></svg>
    <svg className="ml-[11px] shrink-0" width="22" height="20" viewBox="0 0 22 20"><ellipse cx="9" cy="9" rx="8" ry="7" fill="#555" /><circle cx="15" cy="14" r="6" fill="#e0252b" /><path d="M13 12l4 4M17 12l-4 4" stroke="#fff" /></svg>
    <div className="ml-[14px] text-[18px] leading-[20px] w-[20px]">英</div>
    <svg className="ml-[19px] shrink-0" width="20" height="18" viewBox="0 0 20 18" fill="none" stroke="#222" strokeWidth="1.400"><path d="M1 6c5-5 13-5 18 0M4 9.500c3-3 9-3 12 0M7 13c2-1.500 4-1.500 6 0" /><circle cx="10" cy="16" r="1.300" fill="#222" /></svg>
    <svg className="ml-[10px] shrink-0" width="20" height="18" viewBox="0 0 20 18" fill="none" stroke="#222" strokeWidth="1.200"><path d="M1 6h4l5-4v14l-5-4H1zM13 6c1.500 2 1.500 4 0 6M16 3c3 4 3 8 0 12" /></svg>
    <svg className="ml-[11px] shrink-0" width="20" height="12" viewBox="0 0 20 12" fill="none" stroke="#222" strokeWidth="1.200"><rect x=".6" y=".6" width="16" height="10.800" rx="2" /><rect x="3" y="3" width="4" height="6" fill="#222" stroke="none" /><path d="M18.500 4v4" strokeWidth="2" /></svg>
    <div className="ml-[2px] w-[93px] text-right text-[14px] leading-[20px] whitespace-nowrap"><div>21:10</div><div>2022/11/25</div></div>
    <div className="ml-[15px] w-[20px] h-[20px] rounded-full bg-[#0a62b5] text-white text-[12px] flex items-center justify-center">1</div>
  </div>
);

export default function App() {
  return (
    <div className={`w-[1920px] h-[1080px] flex flex-col overflow-hidden ${FONT}`}>
      <TitleBar />
      <TabRow />
      <Ribbon />
      <div className="h-[816px] shrink-0 flex">
        <LeftPanel />
        <div className="flex-1 flex flex-col min-w-0">
          <Toolbar />
          <Viewport />
        </div>
      </div>
      <div className="h-[33px] shrink-0 flex items-center justify-between pl-[6px] pr-[1px] pt-[1px] bg-[#ecedef] border-y border-[#a8aaad] text-[15px] text-[#777]">
        <span>有效, 内部名称: Material1</span>
        <span className="text-[15.5px] text-[#444]">1.3e+02 mm x 83 mm</span>
      </div>
      <Taskbar />
    </div>
  );
}
